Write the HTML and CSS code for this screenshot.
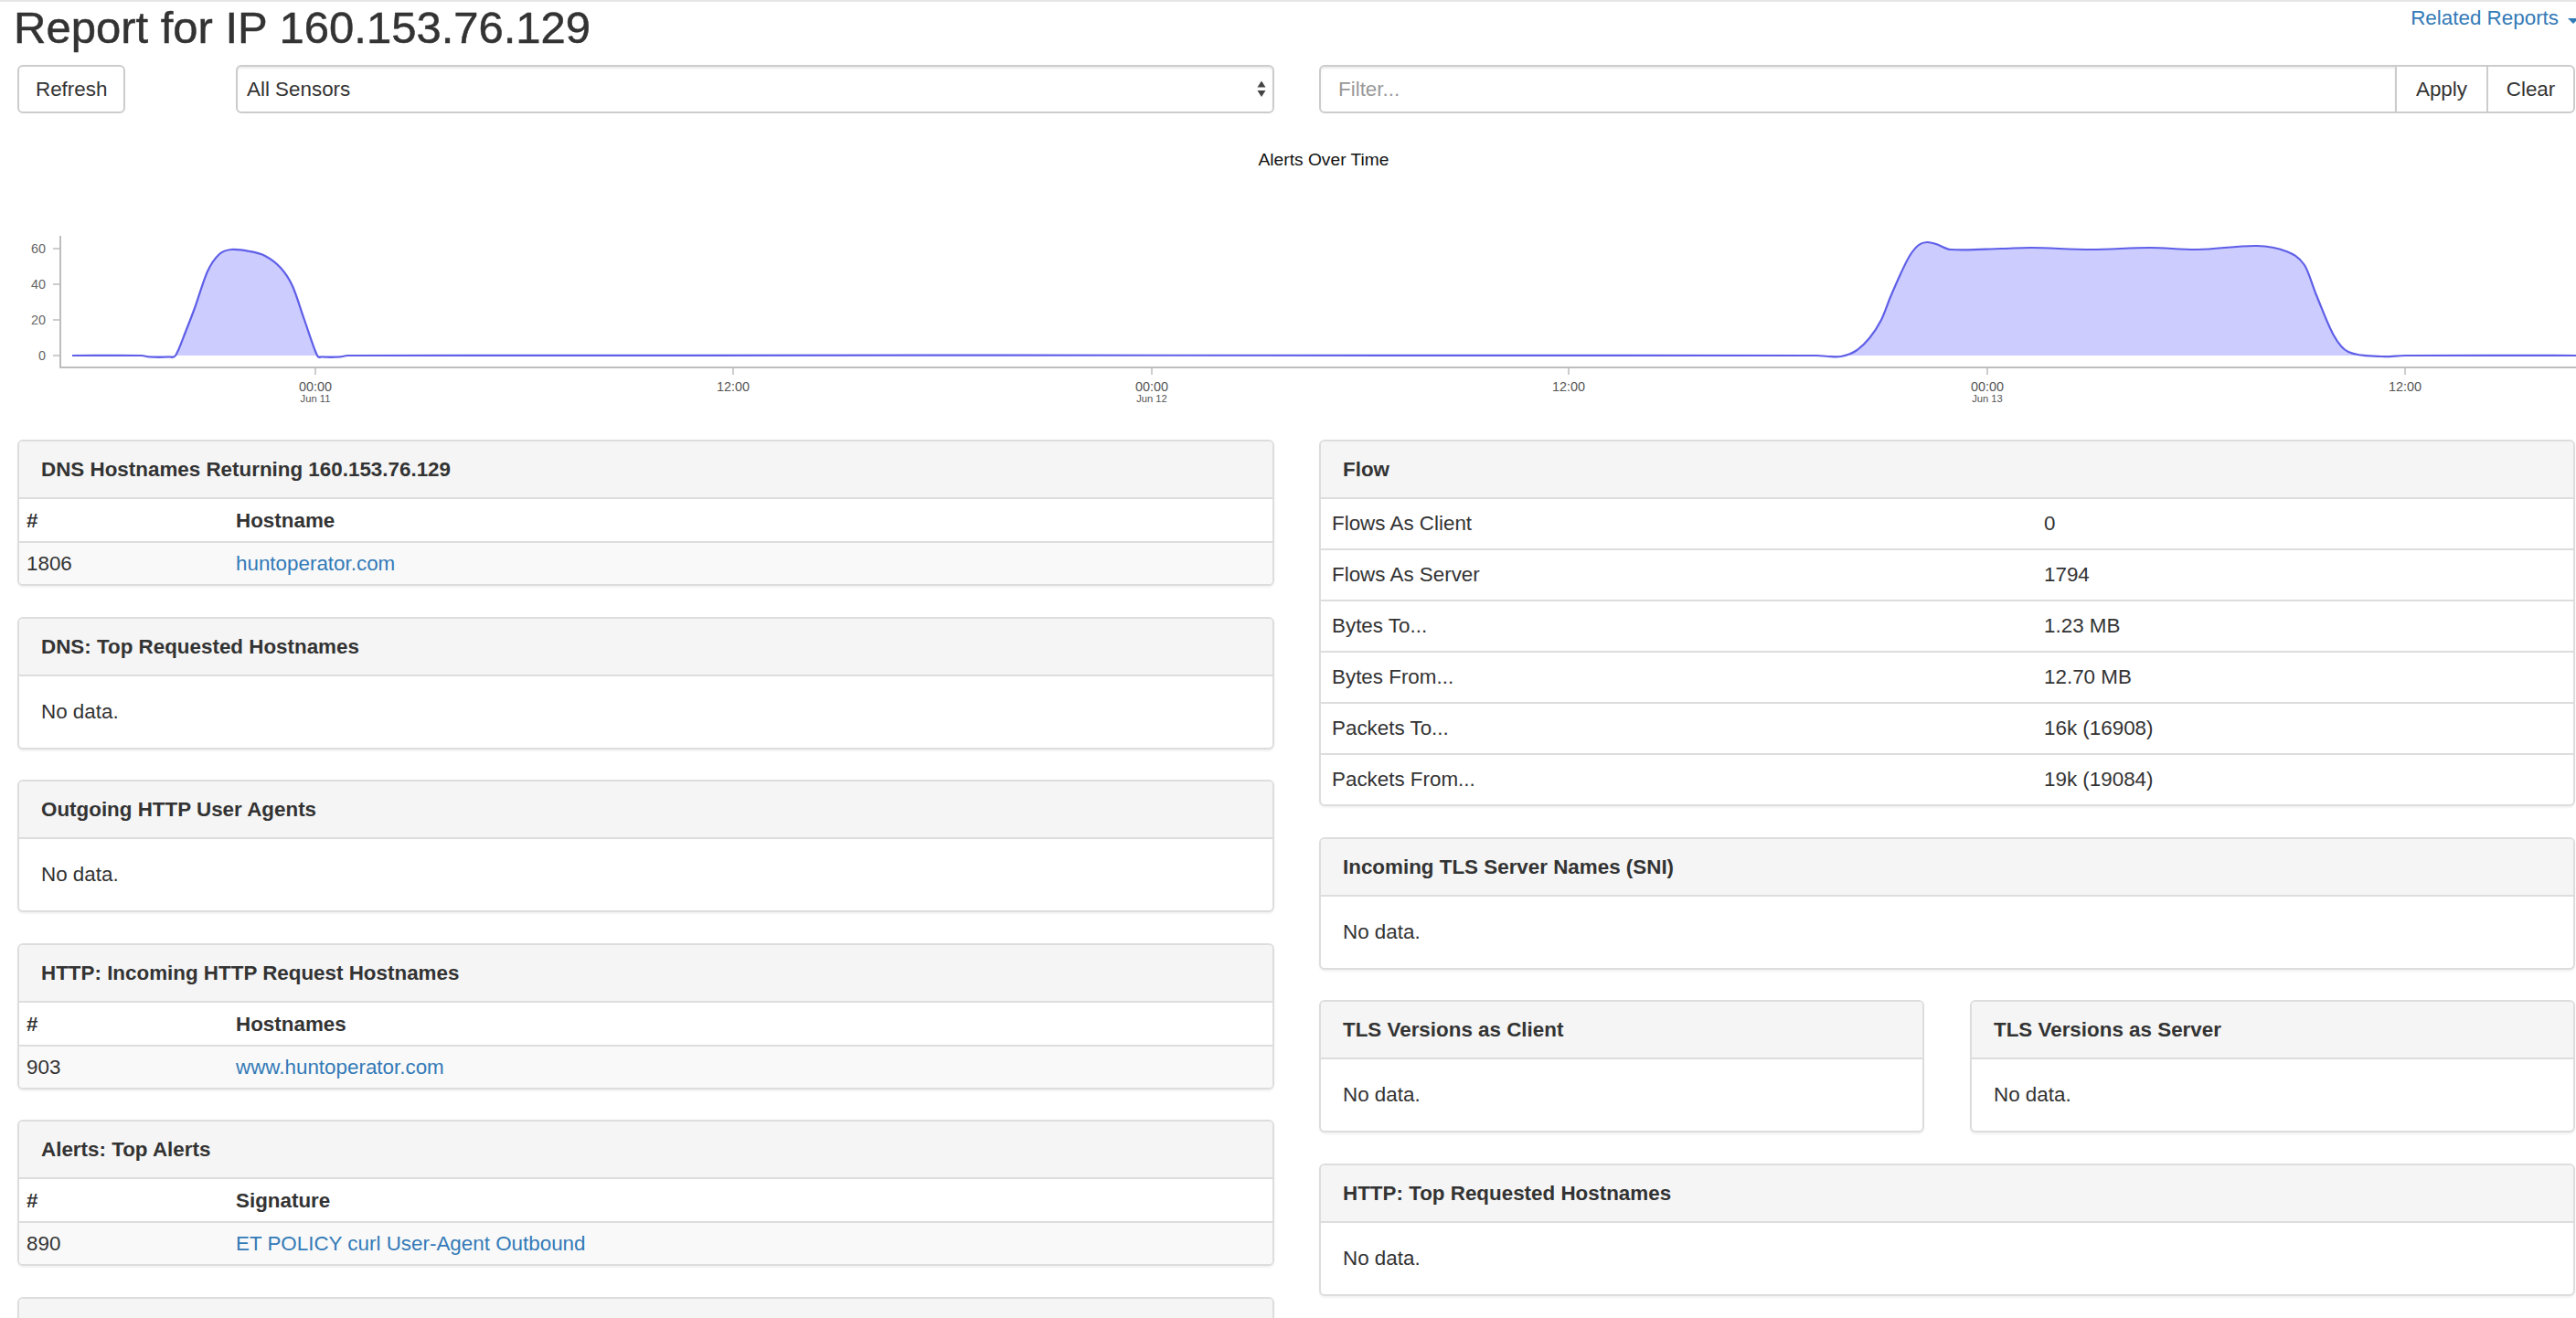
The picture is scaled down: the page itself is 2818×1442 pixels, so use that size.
FILE: index.html
```html
<!DOCTYPE html>
<html lang="en">
<head>
<meta charset="utf-8">
<title>Report for IP 160.153.76.129</title>
<link rel="stylesheet" href="styles.css">
</head>
<body>
<div class="topline"></div>
<div class="page">
  <header class="report-header">
    <h2 class="title">Report for IP 160.153.76.129</h2>
    <a class="related" href="#">Related Reports<span class="caret"></span></a>
  </header>
  <div class="controls">
    <div class="controls-left">
      <button class="btn" type="button">Refresh</button>
      <div class="select">
        <span>All Sensors</span>
        <svg class="select-arrows" width="10" height="19" viewBox="0 0 10 19"><polygon points="0.5,7.5 5,0.5 9.5,7.5" fill="#444"/><polygon points="0.5,11 9.5,11 5,18" fill="#444"/></svg>
      </div>
    </div>
    <div class="filter-group">
      <input class="filter-input" type="text" placeholder="Filter...">
      <button class="btn btn-apply" type="button">Apply</button>
      <button class="btn btn-clear" type="button">Clear</button>
    </div>
  </div>
</div>

<svg class="chart" width="2818" height="357" viewBox="0 124 2818 357">
  <text class="chart-title" x="1448" y="181" text-anchor="middle">Alerts Over Time</text>
  <path id="area" class="area" d="M79,389 L155,389 L163,390.5 L185,390.5 L192,389 L203,363 L213,337 L227,297 L240,278 L253,273 L273,275 L290,280 L307,293 L320,313 L333,350 L347,389 L352,390.5 L372,390.5 L380,389 L1988,389 L2000,390 L2014,390 L2034,380 L2053,357 L2066,340 L2079,307 L2089,280 L2099,268 L2108,265 L2118,267 L2134,273 L2190,272 L2222,271 L2287,273 L2352,271 L2404,273 L2469,269 L2501,275 L2521,290 L2534,323 L2553,367 L2569,385 L2605,390 L2631,389 L2818,389 Z"/>
  <path id="line" class="line" d="M79,389 L155,389 L163,390.5 L185,390.5 L192,389 L203,363 L213,337 L227,297 L240,278 L253,273 L273,275 L290,280 L307,293 L320,313 L333,350 L347,389 L352,390.5 L372,390.5 L380,389 L1988,389 L2000,390 L2014,390 L2034,380 L2053,357 L2066,340 L2079,307 L2089,280 L2099,268 L2108,265 L2118,267 L2134,273 L2190,272 L2222,271 L2287,273 L2352,271 L2404,273 L2469,269 L2501,275 L2521,290 L2534,323 L2553,367 L2569,385 L2605,390 L2631,389 L2818,389"/>
  <g class="axis">
    <line x1="66" y1="258" x2="66" y2="403"/>
    <line x1="65" y1="402" x2="2818" y2="402"/>
    <line class="tick" x1="58" y1="272" x2="66" y2="272"/>
    <line class="tick" x1="58" y1="311" x2="66" y2="311"/>
    <line class="tick" x1="58" y1="350" x2="66" y2="350"/>
    <line class="tick" x1="58" y1="389" x2="66" y2="389"/>
    <line class="tick" x1="345" y1="402" x2="345" y2="410"/>
    <line class="tick" x1="802" y1="402" x2="802" y2="410"/>
    <line class="tick" x1="1260" y1="402" x2="1260" y2="410"/>
    <line class="tick" x1="1716" y1="402" x2="1716" y2="410"/>
    <line class="tick" x1="2174" y1="402" x2="2174" y2="410"/>
    <line class="tick" x1="2631" y1="402" x2="2631" y2="410"/>
  </g>
  <g class="ylabels" text-anchor="end">
    <text x="50" y="277">60</text>
    <text x="50" y="316">40</text>
    <text x="50" y="355">20</text>
    <text x="50" y="394">0</text>
  </g>
  <g class="xlabels" text-anchor="middle">
    <text x="345" y="428">00:00</text>
    <text class="date" x="345" y="440">Jun 11</text>
    <text x="802" y="428">12:00</text>
    <text x="1260" y="428">00:00</text>
    <text class="date" x="1260" y="440">Jun 12</text>
    <text x="1716" y="428">12:00</text>
    <text x="2174" y="428">00:00</text>
    <text class="date" x="2174" y="440">Jun 13</text>
    <text x="2631" y="428">12:00</text>
  </g>
</svg>

<div class="panels">
  <div class="column">
    <section class="panel">
      <div class="panel-heading">DNS Hostnames Returning 160.153.76.129</div>
      <table class="tbl">
        <thead><tr><th class="num">#</th><th>Hostname</th></tr></thead>
        <tbody><tr><td class="num">1806</td><td><a href="#">huntoperator.com</a></td></tr></tbody>
      </table>
    </section>
    <section class="panel">
      <div class="panel-heading">DNS: Top Requested Hostnames</div>
      <div class="panel-body">No data.</div>
    </section>
    <section class="panel">
      <div class="panel-heading">Outgoing HTTP User Agents</div>
      <div class="panel-body">No data.</div>
    </section>
    <section class="panel">
      <div class="panel-heading">HTTP: Incoming HTTP Request Hostnames</div>
      <table class="tbl">
        <thead><tr><th class="num">#</th><th>Hostnames</th></tr></thead>
        <tbody><tr><td class="num">903</td><td><a href="#">www.huntoperator.com</a></td></tr></tbody>
      </table>
    </section>
    <section class="panel">
      <div class="panel-heading">Alerts: Top Alerts</div>
      <table class="tbl">
        <thead><tr><th class="num">#</th><th>Signature</th></tr></thead>
        <tbody><tr><td class="num">890</td><td><a href="#">ET POLICY curl User-Agent Outbound</a></td></tr></tbody>
      </table>
    </section>
    <section class="panel">
      <div class="panel-heading panel-heading-empty"></div>
    </section>
  </div>

  <div class="column">
    <section class="panel">
      <div class="panel-heading">Flow</div>
      <table class="flow">
        <tbody>
          <tr><td class="key">Flows As Client</td><td>0</td></tr>
          <tr><td class="key">Flows As Server</td><td>1794</td></tr>
          <tr><td class="key">Bytes To...</td><td>1.23 MB</td></tr>
          <tr><td class="key">Bytes From...</td><td>12.70 MB</td></tr>
          <tr><td class="key">Packets To...</td><td>16k (16908)</td></tr>
          <tr><td class="key">Packets From...</td><td>19k (19084)</td></tr>
        </tbody>
      </table>
    </section>
    <section class="panel">
      <div class="panel-heading">Incoming TLS Server Names (SNI)</div>
      <div class="panel-body">No data.</div>
    </section>
    <div class="split">
      <section class="panel">
        <div class="panel-heading">TLS Versions as Client</div>
        <div class="panel-body">No data.</div>
      </section>
      <section class="panel">
        <div class="panel-heading">TLS Versions as Server</div>
        <div class="panel-body">No data.</div>
      </section>
    </div>
    <section class="panel">
      <div class="panel-heading">HTTP: Top Requested Hostnames</div>
      <div class="panel-body">No data.</div>
    </section>
  </div>
</div>
<script src="script.js"></script>
</body>
</html>
```

FILE: styles.css
```css
html {
  overflow: hidden;
}

body {
  margin: 0;
  font-family: "Liberation Sans", Arial, Helvetica, sans-serif;
  font-size: 22.4px;
  line-height: 31px;
  color: #333;
  background: #fff;
}

a {
  color: #337ab7;
  text-decoration: none;
}

.topline {
  height: 2px;
  background: #e7e7e7;
}

.page {
  padding: 0 1px 0 19px;
}

.report-header {
  display: flex;
  justify-content: space-between;
  align-items: flex-start;
  height: 69px;
}

.title {
  margin: 2px 0 0 -4px;
  font-size: 49px;
  line-height: 52px;
  font-weight: normal;
  color: #333;
  -webkit-text-stroke: 0.5px #333;
}

.related {
  display: flex;
  align-items: center;
  line-height: 32px;
  margin: 2px -4px 0 0;
  white-space: nowrap;
}

.caret {
  width: 0;
  height: 0;
  margin-left: 10px;
  margin-top: 5px;
  border-top: 6.4px solid #337ab7;
  border-left: 6.4px solid transparent;
  border-right: 6.4px solid transparent;
}

.controls {
  display: flex;
  gap: 49px;
  height: 53px;
}

.controls-left {
  flex: none;
  width: 1375px;
  display: flex;
  justify-content: space-between;
}

.btn {
  font-family: inherit;
  font-size: 22.4px;
  color: #333;
  background: #fff;
  border: 2px solid #ccc;
  border-radius: 6px;
  padding: 0 18px;
  height: 53px;
  line-height: 49px;
  margin: 0;
  box-sizing: border-box;
}

.select {
  width: 1136px;
  height: 53px;
  box-sizing: border-box;
  border: 2px solid #ccc;
  border-radius: 6px;
  padding: 0 7px 0 10px;
  display: flex;
  align-items: center;
  justify-content: space-between;
  box-shadow: inset 0 2px 2px rgba(0, 0, 0, 0.075);
  color: #333;
}

.select-arrows {
  display: block;
}

.filter-group {
  flex: 1;
  display: flex;
  min-width: 0;
}

.filter-input {
  flex: 1;
  min-width: 0;
  height: 53px;
  box-sizing: border-box;
  margin: 0;
  border: 2px solid #ccc;
  border-radius: 6px 0 0 6px;
  padding: 0 19px;
  font-family: inherit;
  font-size: 22.4px;
  color: #555;
  background: #fff;
  box-shadow: inset 0 2px 2px rgba(0, 0, 0, 0.075);
  outline: none;
}

.filter-input::placeholder {
  color: #999;
}

.btn-apply {
  width: 102px;
  padding: 0;
  margin-left: -2px;
  border-radius: 0;
}

.btn-clear {
  width: 97px;
  padding: 0;
  margin-left: -2px;
  border-radius: 0 6px 6px 0;
}

.chart {
  display: block;
  width: 2818px;
  height: 357px;
}

.chart-title {
  font-size: 19.2px;
  fill: #111;
}

.area {
  fill: #ccccff;
  stroke: none;
}

.line {
  fill: none;
  stroke: #5f5fe8;
  stroke-width: 2.2;
  stroke-linejoin: round;
}

.axis line {
  stroke: #bdbdbd;
  stroke-width: 2;
}

.axis .tick {
  stroke-width: 1.5;
}

.ylabels text {
  font-size: 14.4px;
  fill: #666;
}

.xlabels text {
  font-size: 14.4px;
  fill: #555;
}

.xlabels .date {
  font-size: 11.2px;
}

.panels {
  display: grid;
  grid-template-columns: 1375px 1374px;
  column-gap: 49px;
  align-items: start;
  padding: 0 1px 0 19px;
}

.panel {
  border: 2px solid #ddd;
  border-radius: 6px;
  background: #fff;
  box-shadow: 0 2px 2px rgba(0, 0, 0, 0.05);
  margin-bottom: 33.5px;
  overflow: hidden;
}

.panel-heading {
  background: #f5f5f5;
  border-bottom: 2px solid #ddd;
  padding: 15px 24px;
  line-height: 31px;
  font-weight: bold;
  color: #333;
  white-space: nowrap;
}

.panel-heading-empty {
  height: 31px;
}

.panel-body {
  padding: 23px 24px 24px;
  line-height: 31px;
}

.tbl {
  width: 100%;
  border-collapse: separate;
  border-spacing: 0;
}

.tbl th,
.tbl td {
  text-align: left;
  line-height: 31px;
  padding: 7px 8px;
}

.tbl th {
  padding-top: 8px;
  font-weight: bold;
  border-bottom: 2px solid #ddd;
}

.tbl .num {
  width: 213px;
}

.tbl tbody tr {
  background: #f9f9f9;
}

.flow {
  width: 100%;
  border-collapse: separate;
  border-spacing: 0;
}

.flow td {
  padding: 12px;
  line-height: 30px;
  text-align: left;
}

.flow tr + tr td {
  border-top: 2px solid #ddd;
}

.flow .key {
  width: 755px;
}

.split {
  display: grid;
  grid-template-columns: 1fr 1fr;
  column-gap: 50px;
}
```

FILE: script.js
```js
(function () {
  var pts = [
    [79, 389], [155, 389], [163, 390.5], [185, 390.5], [192, 389], [203, 363], [213, 337],
    [227, 297], [240, 278], [253, 273], [273, 275], [290, 280], [307, 293], [320, 313],
    [333, 350], [347, 389], [352, 390.5], [372, 390.5], [380, 389], [1988, 389], [2000, 390],
    [2014, 390], [2030, 384], [2045, 370], [2058, 350], [2068, 325], [2079, 300], [2089, 280], [2099, 268],
    [2108, 265], [2118, 267], [2134, 273], [2190, 272], [2222, 271], [2287, 273], [2352, 271],
    [2404, 273], [2469, 269], [2501, 275], [2521, 290], [2534, 323], [2553, 367], [2569, 385],
    [2605, 390], [2631, 389], [2818, 389]
  ];

  function smooth(p) {
    var n = p.length, m = [], i;
    for (i = 0; i < n; i++) {
      var a = p[Math.max(0, i - 1)], b = p[Math.min(n - 1, i + 1)];
      m.push((b[1] - a[1]) / (b[0] - a[0]));
    }
    var d = 'M' + p[0][0] + ',' + p[0][1];
    for (i = 0; i < n - 1; i++) {
      var dx = (p[i + 1][0] - p[i][0]) / 3;
      d += ' C' + (p[i][0] + dx).toFixed(2) + ',' + (p[i][1] + m[i] * dx).toFixed(2) +
        ' ' + (p[i + 1][0] - dx).toFixed(2) + ',' + (p[i + 1][1] - m[i + 1] * dx).toFixed(2) +
        ' ' + p[i + 1][0] + ',' + p[i + 1][1];
    }
    return d;
  }

  var d = smooth(pts);
  var line = document.getElementById('line');
  var area = document.getElementById('area');
  if (line) line.setAttribute('d', d);
  if (area) area.setAttribute('d', d + ' L2818,389 L79,389 Z');
})();
```
